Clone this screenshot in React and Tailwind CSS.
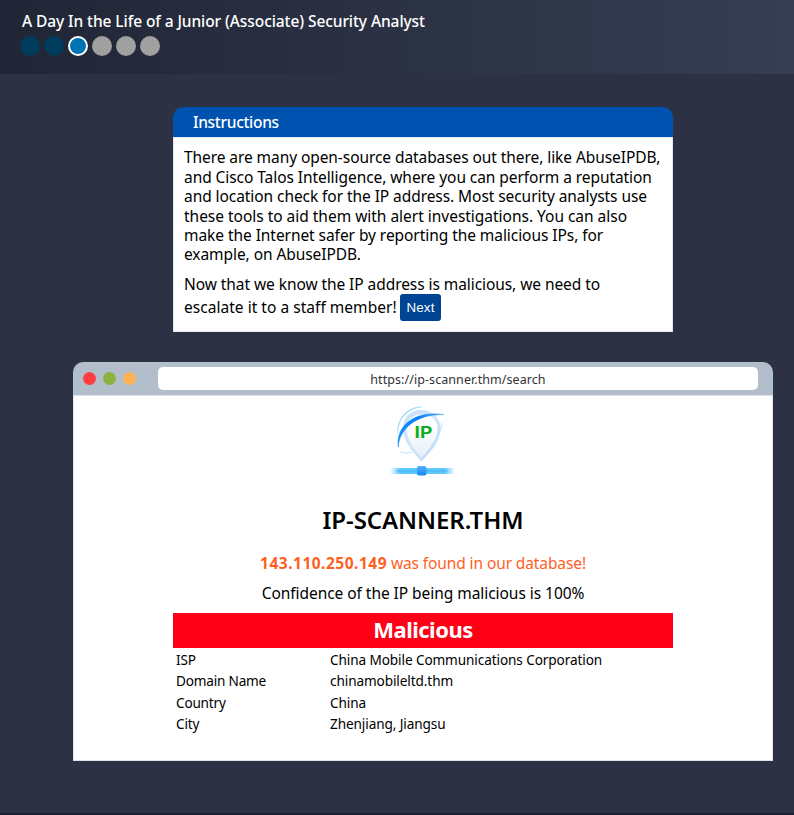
const steps = ["done", "done", "current", "todo", "todo", "todo"];
const stepStyles = {
  done: "bg-[#003d5c]",
  current: "border-2 border-white bg-[#0073b5]",
  todo: "bg-[#a0a0a0]",
};

const instructions = [
  ["There are many open-source databases out there, like AbuseIPDB,", "tracking-[-0.075px]"],
  ["and Cisco Talos Intelligence, where you can perform a reputation", "tracking-[-0.065px]"],
  ["and location check for the IP address. Most security analysts use", "tracking-[-0.07px]"],
  ["these tools to aid them with alert investigations. You can also", "tracking-[-0.02px]"],
  ["make the Internet safer by reporting the malicious IPs, for", "tracking-[-0.06px]"],
  ["example, on AbuseIPDB.", "tracking-[-0.07px]"],
];

const details = [
  ["ISP", "China Mobile Communications Corporation"],
  ["Domain Name", "chinamobileltd.thm"],
  ["Country", "China"],
  ["City", "Zhenjiang, Jiangsu"],
];

function ScannerLogo() {
  return (
    <svg width="110" height="90" viewBox="0 0 110 90" className="block">
      <defs>
        <linearGradient id="pin" x1="0" y1="0" x2="1" y2="1">
          <stop offset="0" stopColor="#c8dff7" />
          <stop offset="0.5" stopColor="#d3e6fa" />
          <stop offset="1" stopColor="#b5d5f5" />
        </linearGradient>
        <linearGradient id="inner" x1="0" y1="0" x2="0" y2="1">
          <stop offset="0.3" stopColor="#ffffff" />
          <stop offset="1" stopColor="#e6effa" />
        </linearGradient>
        <linearGradient id="bar" x1="0" y1="0" x2="1" y2="0">
          <stop offset="0" stopColor="#5cc8fb" stopOpacity="0" />
          <stop offset="0.16" stopColor="#5cc8fb" />
          <stop offset="0.84" stopColor="#5cc8fb" />
          <stop offset="1" stopColor="#5cc8fb" stopOpacity="0" />
        </linearGradient>
        <linearGradient id="arc" x1="0" y1="1" x2="1" y2="0">
          <stop offset="0" stopColor="#1590fb" />
          <stop offset="0.7" stopColor="#0b82f8" />
          <stop offset="1" stopColor="#55aafa" />
        </linearGradient>
        <linearGradient id="node" x1="0" y1="0" x2="0" y2="1">
          <stop offset="0" stopColor="#53b2fb" />
          <stop offset="1" stopColor="#1686f5" />
        </linearGradient>
      </defs>
      <path d="M51.5 14C40 14 33 22 33 32C33 46 43 56 51.5 65.5C60 56 70.5 46 70.5 32C70.5 22 63 14 51.5 14Z" fill="url(#pin)" />
      <path d="M51.5 18.5C43 18.5 36.500 24 36.500 32C36.500 44 45 54 51.500 61.500C58.500 54 67.500 44 67.500 32C67.500 24 60.500 18.500 51.500 18.500Z" fill="url(#inner)" />
      <path d="M27.5 37C27 22 38 10 52 11C38 12 28.500 22 27.500 37Z" fill="#8ed7f5" stroke="#a5dff7" strokeWidth="0.6" />
      <path d="M30 56C35 58 39 57 42 56M72 27C71 36 68 43 61 50" fill="none" stroke="#c4e8fa" strokeWidth="1.200" />
      <path d="M28.200 51C25.500 29 46 14 74 18.700C49 17.500 29.500 31 28.200 51Z" fill="url(#arc)" stroke="url(#arc)" strokeWidth="0.500" />
      <text x="44.500" y="41.700" fill="#0cae22" fontFamily="Inter, sans-serif" fontSize="15.500" fontWeight="700" textLength="17.800" lengthAdjust="spacingAndGlyphs">IP</text>
      <rect x="20" y="72" width="65" height="6" fill="url(#bar)" />
      <rect x="26" y="74.300" width="52" height="1.200" fill="#35aaf5" opacity="0.600" />
      <rect x="47" y="70" width="9.500" height="9.500" rx="2" fill="url(#node)" />
    </svg>
  );
}

export default function App() {
  return (
    <div className="flex h-[815px] w-[794px] flex-col overflow-hidden border-b-2 border-[#1c2032] bg-[#2c3143] font-['Noto_Sans',sans-serif] text-[15.500px] text-black">
      <header className="h-[74px] shrink-0 bg-linear-to-r from-[#212636] to-[#353e52] pt-3">
        <h1 className="ml-[22px] h-5 text-[15.500px] leading-[19px] font-medium tracking-[-0.08px] whitespace-nowrap text-white">
          A Day In the Life of a Junior (Associate) Security Analyst
        </h1>
        <div className="mt-1 ml-5 flex gap-1">
          {steps.map((state, i) => (
            <span key={i} className={`size-5 rounded-full ${stepStyles[state]}`} />
          ))}
        </div>
      </header>

      <section className="mt-[33px] ml-[173px] h-[225px] w-[500px] shrink-0">
        <h2 className="h-[30px] rounded-t-[10px] bg-[#0052b0] pl-5 leading-[30px] font-medium tracking-[-0.3px] text-white">Instructions</h2>
        <div className="h-[195px] border border-[#e5e7eb] bg-white pt-[10.300px] pl-[10px]">
          <div className="leading-[19.400px] whitespace-nowrap">
            {instructions.map(([line, tracking]) => (
              <div key={line} className={tracking}>{line}</div>
            ))}
          </div>
          <div className="mt-[10.700px] leading-[19px] tracking-[-0.07px] whitespace-nowrap">
            <div>Now that we know the IP address is malicious, we need to</div>
            <div className="flex h-[27px] items-center">
              <span className="w-[216px] tracking-[0.03px]">escalate it to a staff member!</span>
              <button className="h-[27px] w-[41px] rounded-[3px] bg-[#004494] font-['Liberation_Sans',sans-serif] text-[13.333px] tracking-[0.2px] text-white">Next</button>
            </div>
          </div>
        </div>
      </section>

      <section className="mt-[30px] ml-[73px] h-[399px] w-[700px] shrink-0">
        <div className="flex h-[33px] items-center rounded-t-[10px] bg-[#b2bfca] pl-[10px]">
          <div className="flex w-[75px] gap-[7px]">
            <span className="size-[13px] rounded-full bg-[#ff3d43]" />
            <span className="size-[13px] rounded-full bg-[#8bb23e]" />
            <span className="size-[13px] rounded-full bg-[#ffb155]" />
          </div>
          <div className="h-[23px] w-[600px] rounded-[5px] bg-white text-center text-[12.500px] leading-[25px] tracking-[0.07px] text-[#333]">
            https://ip-scanner.thm/search
          </div>
        </div>
        <div className="flex h-[366px] flex-col items-center border border-[#dfe3e5] bg-white whitespace-nowrap">
          <div className="mr-[-4px] h-[90px]">
            <ScannerLogo />
          </div>
          <h2 className="mt-[18px] h-[32px] text-[24px] leading-[32px] font-semibold tracking-[-0.07px]">IP-SCANNER.THM</h2>
          <p className="mt-[17px] h-5 leading-5 tracking-[-0.11px] text-[#ff5f1f]">
            <b className="tracking-[0.5px]">143.110.250.149</b> was found in our database!
          </p>
          <p className="mt-[10px] h-5 leading-5 tracking-[-0.05px]">Confidence of the IP being malicious is 100%</p>
          <div className="mt-[10px] h-[35px] w-[500px] bg-[#ff0016] text-center text-[22px] leading-[33px] font-bold tracking-[-0.5px] text-white">Malicious</div>
          <dl className="grid w-[494px] grid-cols-[154px_1fr] pt-px text-[13.600px] leading-[21.400px] tracking-[-0.2px]">
            {details.map(([label, value]) => (
              <div key={label} className="contents">
                <dt>{label}</dt>
                <dd className="tracking-[-0.1px]">{value}</dd>
              </div>
            ))}
          </dl>
        </div>
      </section>
    </div>
  );
}
